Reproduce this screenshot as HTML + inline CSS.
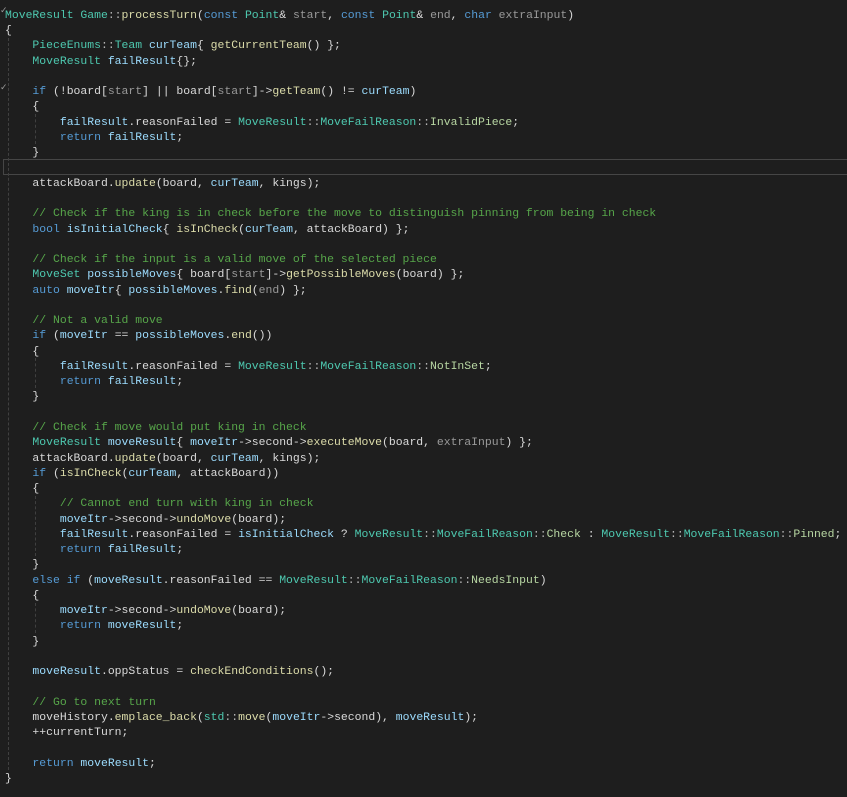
<!DOCTYPE html>
<html><head><meta charset="utf-8"><style>
html,body{margin:0;padding:0;background:#1e1e1e;width:847px;height:797px;overflow:hidden}
pre{margin:0;position:absolute;left:5px;top:7.8px;font-family:"Liberation Mono",monospace;font-size:11.43px;line-height:15.26px;color:#dadada;white-space:pre}
.t{color:#4ec9b0}.f{color:#dcdcaa}.k{color:#569cd6}.v{color:#9cdcfe}.c{color:#57a64a}.e{color:#b8d7a3}.o{color:#b4b4b4}.p{color:#9a9a9a}
.g{position:absolute;width:0;border-left:1px dashed #404040}
.hl{position:absolute;left:3px;top:159px;width:844px;height:14px;border:1px solid #464646;border-right:none}
.ch{position:absolute;left:0;font-size:9px;color:#999;font-family:"DejaVu Sans",sans-serif}
</style></head><body>
<div class="hl"></div>
<div class="g" style="left:8px;top:38px;height:732px"></div>
<div class="g" style="left:35px;top:114px;height:30px"></div>
<div class="g" style="left:35px;top:358px;height:30px"></div>
<div class="g" style="left:35px;top:496px;height:60px"></div>
<div class="g" style="left:35px;top:603px;height:30px"></div>
<div class="ch" style="top:6px">✓</div>
<div class="ch" style="top:83px">✓</div>
<pre><span class="t">MoveResult</span> <span class="t">Game</span><span class="o">::</span><span class="f">processTurn</span>(<span class="k">const</span> <span class="t">Point</span>&amp; <span class="p">start</span>, <span class="k">const</span> <span class="t">Point</span>&amp; <span class="p">end</span>, <span class="k">char</span> <span class="p">extraInput</span>)
{
    <span class="t">PieceEnums</span><span class="o">::</span><span class="t">Team</span> <span class="v">curTeam</span>{ <span class="f">getCurrentTeam</span>() };
    <span class="t">MoveResult</span> <span class="v">failResult</span>{};

    <span class="k">if</span> (!board[<span class="p">start</span>] || board[<span class="p">start</span>]-&gt;<span class="f">getTeam</span>() != <span class="v">curTeam</span>)
    {
        <span class="v">failResult</span>.reasonFailed = <span class="t">MoveResult</span><span class="o">::</span><span class="t">MoveFailReason</span><span class="o">::</span><span class="e">InvalidPiece</span>;
        <span class="k">return</span> <span class="v">failResult</span>;
    }

    attackBoard.<span class="f">update</span>(board, <span class="v">curTeam</span>, kings);

    <span class="c">// Check if the king is in check before the move to distinguish pinning from being in check</span>
    <span class="k">bool</span> <span class="v">isInitialCheck</span>{ <span class="f">isInCheck</span>(<span class="v">curTeam</span>, attackBoard) };

    <span class="c">// Check if the input is a valid move of the selected piece</span>
    <span class="t">MoveSet</span> <span class="v">possibleMoves</span>{ board[<span class="p">start</span>]-&gt;<span class="f">getPossibleMoves</span>(board) };
    <span class="k">auto</span> <span class="v">moveItr</span>{ <span class="v">possibleMoves</span>.<span class="f">find</span>(<span class="p">end</span>) };

    <span class="c">// Not a valid move</span>
    <span class="k">if</span> (<span class="v">moveItr</span> == <span class="v">possibleMoves</span>.<span class="f">end</span>())
    {
        <span class="v">failResult</span>.reasonFailed = <span class="t">MoveResult</span><span class="o">::</span><span class="t">MoveFailReason</span><span class="o">::</span><span class="e">NotInSet</span>;
        <span class="k">return</span> <span class="v">failResult</span>;
    }

    <span class="c">// Check if move would put king in check</span>
    <span class="t">MoveResult</span> <span class="v">moveResult</span>{ <span class="v">moveItr</span>-&gt;second-&gt;<span class="f">executeMove</span>(board, <span class="p">extraInput</span>) };
    attackBoard.<span class="f">update</span>(board, <span class="v">curTeam</span>, kings);
    <span class="k">if</span> (<span class="f">isInCheck</span>(<span class="v">curTeam</span>, attackBoard))
    {
        <span class="c">// Cannot end turn with king in check</span>
        <span class="v">moveItr</span>-&gt;second-&gt;<span class="f">undoMove</span>(board);
        <span class="v">failResult</span>.reasonFailed = <span class="v">isInitialCheck</span> ? <span class="t">MoveResult</span><span class="o">::</span><span class="t">MoveFailReason</span><span class="o">::</span><span class="e">Check</span> : <span class="t">MoveResult</span><span class="o">::</span><span class="t">MoveFailReason</span><span class="o">::</span><span class="e">Pinned</span>;
        <span class="k">return</span> <span class="v">failResult</span>;
    }
    <span class="k">else if</span> (<span class="v">moveResult</span>.reasonFailed == <span class="t">MoveResult</span><span class="o">::</span><span class="t">MoveFailReason</span><span class="o">::</span><span class="e">NeedsInput</span>)
    {
        <span class="v">moveItr</span>-&gt;second-&gt;<span class="f">undoMove</span>(board);
        <span class="k">return</span> <span class="v">moveResult</span>;
    }

    <span class="v">moveResult</span>.oppStatus = <span class="f">checkEndConditions</span>();

    <span class="c">// Go to next turn</span>
    moveHistory.<span class="f">emplace_back</span>(<span class="t">std</span><span class="o">::</span><span class="f">move</span>(<span class="v">moveItr</span>-&gt;second), <span class="v">moveResult</span>);
    ++currentTurn;

    <span class="k">return</span> <span class="v">moveResult</span>;
}</pre>
</body></html>
